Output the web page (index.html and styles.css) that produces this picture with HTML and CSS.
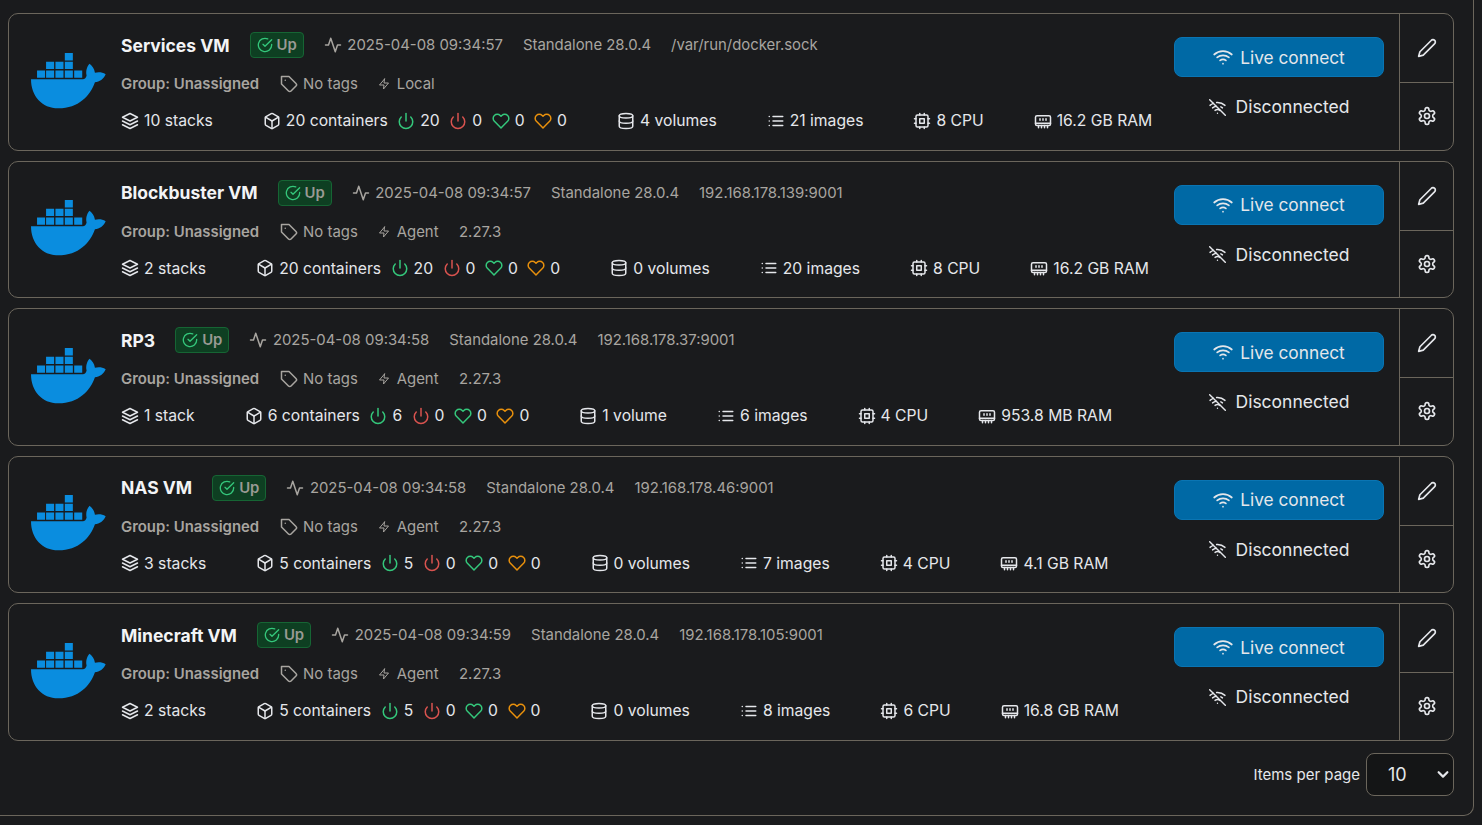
FILE: index.html
```html
<!DOCTYPE html>
<html lang="en">
<head>
  <meta charset="UTF-8" />
  <title>Environments</title>
  <link rel="stylesheet" href="styles.css">
</head>
<body>
  <svg class="icon-defs" aria-hidden="true">
    <symbol id="i-whale" viewBox="30 35 230 170">
      <path d="M134 38h24v22h-24zM78 64h24v22H78zM106 64h24v22h-24zM134 64h24v22h-24zM51 90h24v22H51zM78 90h24v22H78zM106 90h24v22h-24zM134 90h24v22h-24zM162 90h24v22h-24z"/>
      <path d="M33 116H188C193 116 198 112 199 105C196 92 200 78 208 70C216 76 222 84 224 97C234 94 246 95 256 101C250 115 238 124 224 125C210 165 175 203 115 203C65 203 33 165 33 116Z"/>
    </symbol>
    <symbol id="i-check" viewBox="0 0 24 24"><path d="M22 11.08V12a10 10 0 1 1-5.93-9.14"/><path d="M22 4 12 14.01l-3-3"/></symbol>
    <symbol id="i-activity" viewBox="0 0 24 24"><path d="M22 12h-4l-3 9L9 3l-3 9H2"/></symbol>
    <symbol id="i-tag" viewBox="0 0 24 24"><path d="M12 2H2v10l9.29 9.29c.94.94 2.48.94 3.42 0l6.58-6.58c.94-.94.94-2.48 0-3.42L12 2Z"/><path d="M7 7h.01"/></symbol>
    <symbol id="i-zap" viewBox="0 0 24 24"><path d="M13 2 3 14h9l-1 8 10-12h-9l1-8z"/></symbol>
    <symbol id="i-layers" viewBox="0 0 24 24"><path d="M12 2 2 7l10 5 10-5-10-5z"/><path d="m2 17 10 5 10-5"/><path d="m2 12 10 5 10-5"/></symbol>
    <symbol id="i-box" viewBox="0 0 24 24"><path d="M21 16V8a2 2 0 0 0-1-1.73l-7-4a2 2 0 0 0-2 0l-7 4A2 2 0 0 0 3 8v8a2 2 0 0 0 1 1.73l7 4a2 2 0 0 0 2 0l7-4A2 2 0 0 0 21 16z"/><path d="M3.27 6.96 12 12.01l8.73-5.05"/><path d="M12 22.08V12"/></symbol>
    <symbol id="i-power" viewBox="0 0 24 24"><path d="M18.36 6.64a9 9 0 1 1-12.73 0"/><path d="M12 2v10"/></symbol>
    <symbol id="i-heart" viewBox="0 0 24 24"><path d="M20.84 4.61a5.5 5.5 0 0 0-7.78 0L12 5.67l-1.06-1.06a5.5 5.5 0 0 0-7.78 7.78l1.06 1.06L12 21.23l7.78-7.78 1.06-1.06a5.5 5.5 0 0 0 0-7.78z"/></symbol>
    <symbol id="i-database" viewBox="0 0 24 24"><ellipse cx="12" cy="5" rx="9" ry="3"/><path d="M21 12c0 1.66-4 3-9 3s-9-1.34-9-3"/><path d="M3 5v14c0 1.66 4 3 9 3s9-1.34 9-3V5"/></symbol>
    <symbol id="i-list" viewBox="0 0 24 24"><path d="M8 6h13M8 12h13M8 18h13M3 6h.01M3 12h.01M3 18h.01"/></symbol>
    <symbol id="i-cpu" viewBox="0 0 24 24"><rect x="4" y="4" width="16" height="16" rx="2"/><rect x="9" y="9" width="6" height="6"/><path d="M15 2v2M15 20v2M2 15h2M2 9h2M20 15h2M20 9h2M9 2v2M9 20v2"/></symbol>
    <symbol id="i-ram" viewBox="0 0 24 24"><path d="M6 21v-3M10 21v-3M14 21v-3M18 21v-3M8 11V9M16 11V9M12 11V9M2 15h20"/><path d="M4 5h16a2 2 0 0 1 2 2v9a2 2 0 0 1-2 2H4a2 2 0 0 1-2-2V7a2 2 0 0 1 2-2z"/></symbol>
    <symbol id="i-wifi" viewBox="0 0 24 24"><path d="M5 12.55a11 11 0 0 1 14.08 0"/><path d="M1.42 9a16 16 0 0 1 21.16 0"/><path d="M8.53 16.11a6 6 0 0 1 6.95 0"/><path d="M12 20h.01"/></symbol>
    <symbol id="i-wifi-off" viewBox="0 0 24 24"><path d="m1 1 22 22"/><path d="M16.72 11.06A10.94 10.94 0 0 1 19 12.55"/><path d="M5 12.55a10.94 10.94 0 0 1 5.17-2.39"/><path d="M10.71 5.05A16 16 0 0 1 22.58 9"/><path d="M1.42 9a15.91 15.91 0 0 1 4.7-2.88"/><path d="M8.53 16.11a6 6 0 0 1 6.95 0"/><path d="M12 20h.01"/></symbol>
    <symbol id="i-pencil" viewBox="0 0 24 24"><path d="M17 3a2.85 2.83 0 1 1 4 4L7.5 20.5 2 22l1.5-5.5Z"/></symbol>
    <symbol id="i-settings" viewBox="0 0 24 24"><path d="M12.22 2h-.44a2 2 0 0 0-2 2v.18a2 2 0 0 1-1 1.73l-.43.25a2 2 0 0 1-2 0l-.15-.08a2 2 0 0 0-2.73.73l-.22.38a2 2 0 0 0 .73 2.73l.15.1a2 2 0 0 1 1 1.72v.51a2 2 0 0 1-1 1.74l-.15.09a2 2 0 0 0-.73 2.73l.22.38a2 2 0 0 0 2.73.73l.15-.08a2 2 0 0 1 2 0l.43.25a2 2 0 0 1 1 1.73V20a2 2 0 0 0 2 2h.44a2 2 0 0 0 2-2v-.18a2 2 0 0 1 1-1.73l.43-.25a2 2 0 0 1 2 0l.15.08a2 2 0 0 0 2.73-.73l.22-.39a2 2 0 0 0-.73-2.73l-.15-.08a2 2 0 0 1-1-1.74v-.5a2 2 0 0 1 1-1.74l.15-.09a2 2 0 0 0 .73-2.73l-.22-.38a2 2 0 0 0-2.73-.73l-.15.08a2 2 0 0 1-2 0l-.43-.25a2 2 0 0 1-1-1.73V4a2 2 0 0 0-2-2z"/><circle cx="12" cy="12" r="3"/></symbol>
  </svg>

  <main class="panel">
    <div class="env-list">

      <article class="env-card">
        <svg class="whale"><use href="#i-whale"/></svg>
        <div class="env-info">
          <div class="row row-top">
            <span class="env-name">Services VM</span>
            <span class="badge-up"><svg class="ico"><use href="#i-check"/></svg>Up</span>
            <span class="item"><svg class="ico"><use href="#i-activity"/></svg>2025-04-08 09:34:57</span>
            <span>Standalone 28.0.4</span>
            <span>/var/run/docker.sock</span>
          </div>
          <div class="row row-meta">
            <span class="group">Group: Unassigned</span>
            <span class="item"><svg class="ico"><use href="#i-tag"/></svg>No tags</span>
            <span class="item"><svg class="ico ico-sm"><use href="#i-zap"/></svg>Local</span>
          </div>
          <div class="row row-stats">
            <span class="item"><svg class="ico"><use href="#i-layers"/></svg>10 stacks</span>
            <span class="containers">
              <span class="item"><svg class="ico"><use href="#i-box"/></svg>20 containers</span>
              <span class="item"><svg class="ico green"><use href="#i-power"/></svg>20</span>
              <span class="item"><svg class="ico red"><use href="#i-power"/></svg>0</span>
              <span class="item"><svg class="ico green"><use href="#i-heart"/></svg>0</span>
              <span class="item"><svg class="ico orange"><use href="#i-heart"/></svg>0</span>
            </span>
            <span class="item"><svg class="ico"><use href="#i-database"/></svg>4 volumes</span>
            <span class="item"><svg class="ico"><use href="#i-list"/></svg>21 images</span>
            <span class="item"><svg class="ico"><use href="#i-cpu"/></svg>8 CPU</span>
            <span class="item"><svg class="ico"><use href="#i-ram"/></svg>16.2 GB RAM</span>
          </div>
        </div>
        <div class="env-connect">
          <button class="btn-live"><svg class="ico ico-lg"><use href="#i-wifi"/></svg>Live connect</button>
          <span class="disconnected"><svg class="ico"><use href="#i-wifi-off"/></svg>Disconnected</span>
        </div>
        <div class="env-actions">
          <a class="action"><svg class="ico ico-lg"><use href="#i-pencil"/></svg></a>
          <a class="action"><svg class="ico ico-lg"><use href="#i-settings"/></svg></a>
        </div>
      </article>

      <article class="env-card">
        <svg class="whale"><use href="#i-whale"/></svg>
        <div class="env-info">
          <div class="row row-top">
            <span class="env-name">Blockbuster VM</span>
            <span class="badge-up"><svg class="ico"><use href="#i-check"/></svg>Up</span>
            <span class="item"><svg class="ico"><use href="#i-activity"/></svg>2025-04-08 09:34:57</span>
            <span>Standalone 28.0.4</span>
            <span>192.168.178.139:9001</span>
          </div>
          <div class="row row-meta">
            <span class="group">Group: Unassigned</span>
            <span class="item"><svg class="ico"><use href="#i-tag"/></svg>No tags</span>
            <span class="item"><svg class="ico ico-sm"><use href="#i-zap"/></svg>Agent</span>
            <span>2.27.3</span>
          </div>
          <div class="row row-stats">
            <span class="item"><svg class="ico"><use href="#i-layers"/></svg>2 stacks</span>
            <span class="containers">
              <span class="item"><svg class="ico"><use href="#i-box"/></svg>20 containers</span>
              <span class="item"><svg class="ico green"><use href="#i-power"/></svg>20</span>
              <span class="item"><svg class="ico red"><use href="#i-power"/></svg>0</span>
              <span class="item"><svg class="ico green"><use href="#i-heart"/></svg>0</span>
              <span class="item"><svg class="ico orange"><use href="#i-heart"/></svg>0</span>
            </span>
            <span class="item"><svg class="ico"><use href="#i-database"/></svg>0 volumes</span>
            <span class="item"><svg class="ico"><use href="#i-list"/></svg>20 images</span>
            <span class="item"><svg class="ico"><use href="#i-cpu"/></svg>8 CPU</span>
            <span class="item"><svg class="ico"><use href="#i-ram"/></svg>16.2 GB RAM</span>
          </div>
        </div>
        <div class="env-connect">
          <button class="btn-live"><svg class="ico ico-lg"><use href="#i-wifi"/></svg>Live connect</button>
          <span class="disconnected"><svg class="ico"><use href="#i-wifi-off"/></svg>Disconnected</span>
        </div>
        <div class="env-actions">
          <a class="action"><svg class="ico ico-lg"><use href="#i-pencil"/></svg></a>
          <a class="action"><svg class="ico ico-lg"><use href="#i-settings"/></svg></a>
        </div>
      </article>

      <article class="env-card">
        <svg class="whale"><use href="#i-whale"/></svg>
        <div class="env-info">
          <div class="row row-top">
            <span class="env-name">RP3</span>
            <span class="badge-up"><svg class="ico"><use href="#i-check"/></svg>Up</span>
            <span class="item"><svg class="ico"><use href="#i-activity"/></svg>2025-04-08 09:34:58</span>
            <span>Standalone 28.0.4</span>
            <span>192.168.178.37:9001</span>
          </div>
          <div class="row row-meta">
            <span class="group">Group: Unassigned</span>
            <span class="item"><svg class="ico"><use href="#i-tag"/></svg>No tags</span>
            <span class="item"><svg class="ico ico-sm"><use href="#i-zap"/></svg>Agent</span>
            <span>2.27.3</span>
          </div>
          <div class="row row-stats">
            <span class="item"><svg class="ico"><use href="#i-layers"/></svg>1 stack</span>
            <span class="containers">
              <span class="item"><svg class="ico"><use href="#i-box"/></svg>6 containers</span>
              <span class="item"><svg class="ico green"><use href="#i-power"/></svg>6</span>
              <span class="item"><svg class="ico red"><use href="#i-power"/></svg>0</span>
              <span class="item"><svg class="ico green"><use href="#i-heart"/></svg>0</span>
              <span class="item"><svg class="ico orange"><use href="#i-heart"/></svg>0</span>
            </span>
            <span class="item"><svg class="ico"><use href="#i-database"/></svg>1 volume</span>
            <span class="item"><svg class="ico"><use href="#i-list"/></svg>6 images</span>
            <span class="item"><svg class="ico"><use href="#i-cpu"/></svg>4 CPU</span>
            <span class="item"><svg class="ico"><use href="#i-ram"/></svg>953.8 MB RAM</span>
          </div>
        </div>
        <div class="env-connect">
          <button class="btn-live"><svg class="ico ico-lg"><use href="#i-wifi"/></svg>Live connect</button>
          <span class="disconnected"><svg class="ico"><use href="#i-wifi-off"/></svg>Disconnected</span>
        </div>
        <div class="env-actions">
          <a class="action"><svg class="ico ico-lg"><use href="#i-pencil"/></svg></a>
          <a class="action"><svg class="ico ico-lg"><use href="#i-settings"/></svg></a>
        </div>
      </article>

      <article class="env-card">
        <svg class="whale"><use href="#i-whale"/></svg>
        <div class="env-info">
          <div class="row row-top">
            <span class="env-name">NAS VM</span>
            <span class="badge-up"><svg class="ico"><use href="#i-check"/></svg>Up</span>
            <span class="item"><svg class="ico"><use href="#i-activity"/></svg>2025-04-08 09:34:58</span>
            <span>Standalone 28.0.4</span>
            <span>192.168.178.46:9001</span>
          </div>
          <div class="row row-meta">
            <span class="group">Group: Unassigned</span>
            <span class="item"><svg class="ico"><use href="#i-tag"/></svg>No tags</span>
            <span class="item"><svg class="ico ico-sm"><use href="#i-zap"/></svg>Agent</span>
            <span>2.27.3</span>
          </div>
          <div class="row row-stats">
            <span class="item"><svg class="ico"><use href="#i-layers"/></svg>3 stacks</span>
            <span class="containers">
              <span class="item"><svg class="ico"><use href="#i-box"/></svg>5 containers</span>
              <span class="item"><svg class="ico green"><use href="#i-power"/></svg>5</span>
              <span class="item"><svg class="ico red"><use href="#i-power"/></svg>0</span>
              <span class="item"><svg class="ico green"><use href="#i-heart"/></svg>0</span>
              <span class="item"><svg class="ico orange"><use href="#i-heart"/></svg>0</span>
            </span>
            <span class="item"><svg class="ico"><use href="#i-database"/></svg>0 volumes</span>
            <span class="item"><svg class="ico"><use href="#i-list"/></svg>7 images</span>
            <span class="item"><svg class="ico"><use href="#i-cpu"/></svg>4 CPU</span>
            <span class="item"><svg class="ico"><use href="#i-ram"/></svg>4.1 GB RAM</span>
          </div>
        </div>
        <div class="env-connect">
          <button class="btn-live"><svg class="ico ico-lg"><use href="#i-wifi"/></svg>Live connect</button>
          <span class="disconnected"><svg class="ico"><use href="#i-wifi-off"/></svg>Disconnected</span>
        </div>
        <div class="env-actions">
          <a class="action"><svg class="ico ico-lg"><use href="#i-pencil"/></svg></a>
          <a class="action"><svg class="ico ico-lg"><use href="#i-settings"/></svg></a>
        </div>
      </article>

      <article class="env-card">
        <svg class="whale"><use href="#i-whale"/></svg>
        <div class="env-info">
          <div class="row row-top">
            <span class="env-name">Minecraft VM</span>
            <span class="badge-up"><svg class="ico"><use href="#i-check"/></svg>Up</span>
            <span class="item"><svg class="ico"><use href="#i-activity"/></svg>2025-04-08 09:34:59</span>
            <span>Standalone 28.0.4</span>
            <span>192.168.178.105:9001</span>
          </div>
          <div class="row row-meta">
            <span class="group">Group: Unassigned</span>
            <span class="item"><svg class="ico"><use href="#i-tag"/></svg>No tags</span>
            <span class="item"><svg class="ico ico-sm"><use href="#i-zap"/></svg>Agent</span>
            <span>2.27.3</span>
          </div>
          <div class="row row-stats">
            <span class="item"><svg class="ico"><use href="#i-layers"/></svg>2 stacks</span>
            <span class="containers">
              <span class="item"><svg class="ico"><use href="#i-box"/></svg>5 containers</span>
              <span class="item"><svg class="ico green"><use href="#i-power"/></svg>5</span>
              <span class="item"><svg class="ico red"><use href="#i-power"/></svg>0</span>
              <span class="item"><svg class="ico green"><use href="#i-heart"/></svg>0</span>
              <span class="item"><svg class="ico orange"><use href="#i-heart"/></svg>0</span>
            </span>
            <span class="item"><svg class="ico"><use href="#i-database"/></svg>0 volumes</span>
            <span class="item"><svg class="ico"><use href="#i-list"/></svg>8 images</span>
            <span class="item"><svg class="ico"><use href="#i-cpu"/></svg>6 CPU</span>
            <span class="item"><svg class="ico"><use href="#i-ram"/></svg>16.8 GB RAM</span>
          </div>
        </div>
        <div class="env-connect">
          <button class="btn-live"><svg class="ico ico-lg"><use href="#i-wifi"/></svg>Live connect</button>
          <span class="disconnected"><svg class="ico"><use href="#i-wifi-off"/></svg>Disconnected</span>
        </div>
        <div class="env-actions">
          <a class="action"><svg class="ico ico-lg"><use href="#i-pencil"/></svg></a>
          <a class="action"><svg class="ico ico-lg"><use href="#i-settings"/></svg></a>
        </div>
      </article>

    </div>

    <div class="pager">
      <span>Items per page</span>
      <div class="page-select">
        <span>10</span>
        <svg class="chevron" viewBox="0 0 16 16"><path d="m3 6 5 5 5-5"/></svg>
      </div>
    </div>
  </main>
</body>
</html>
```

FILE: styles.css
```css
* { box-sizing: border-box; margin: 0; padding: 0; }
html, body { height: 100%; }
body { font-family: Inter, 'Noto Sans', sans-serif; background-color: #1a1b1d; color: #e5e7eb; font-size: 16px; overflow: hidden; }

.icon-defs { display: none; }
.ico { width: 18px; height: 18px; flex: none; fill: none; stroke: currentColor; stroke-width: 2; stroke-linecap: round; stroke-linejoin: round; }
.ico-lg { width: 20px; height: 20px; }
.ico-sm { width: 12px; height: 12px; margin-right: 1px; }
.green { color: #34c77b; }
.red { color: #d9534f; }
.orange { color: #e8900c; }

.panel { width: 1474px; height: 816px; padding: 13px 19px 0 8px; border-right: 1px solid #6b665c; border-bottom: 1px solid #6b665c; border-bottom-right-radius: 10px; }
.env-list { display: flex; flex-direction: column; gap: 10px; }

.env-card { display: flex; align-items: stretch; height: 137.5px; border: 1px solid #6b665c; border-radius: 10px; }
.whale { width: 77px; height: 57px; flex: none; align-self: center; margin: 0 14px 3px 21px; }
#i-whale path { fill: #0a8ddf; stroke: none; }

.env-info { flex: 1; display: flex; flex-direction: column; padding-top: 19px; min-width: 0; }
.row { display: flex; align-items: center; gap: 20px; white-space: nowrap; }
.item { display: inline-flex; align-items: center; gap: 5.5px; }
.row-top { height: 24px; color: #a8a5a0; font-size: 14.9px; }
.env-name { font-size: 17.5px; font-weight: 700; color: #f3f4f6; }
.badge-up { display: inline-flex; align-items: center; gap: 4px; height: 26px; padding: 0 6px; background: #0e3f22; border: 1px solid #166534; border-radius: 4px; font-weight: 600; color: #9a9a94; }
.badge-up .ico { width: 16px; height: 16px; color: #34c77b; }
.row-meta { height: 24px; margin-top: 15px; gap: 20.5px; color: #a8a5a0; font-size: 14.9px; }
.group { font-weight: 600; }
.row-stats { height: 24px; margin-top: 12.5px; gap: 50px; color: #e5e7eb; font-size: 15.7px; }
.row-stats .item { gap: 5px; }
.containers { display: inline-flex; align-items: center; gap: 9.5px; }

.env-connect { width: 210px; flex: none; display: flex; flex-direction: column; align-items: center; padding-top: 23px; margin-right: 15px; }
.btn-live { width: 100%; height: 40px; display: flex; align-items: center; justify-content: center; gap: 7px; background: #0069a5; color: #e5e7eb; border: 1px solid #0a75b3; border-radius: 8px; font: inherit; font-size: 17.3px; cursor: pointer; }
.disconnected { display: flex; align-items: center; gap: 10px; margin-top: 18px; font-size: 17.5px; line-height: 24px; }
.disconnected .ico { width: 17px; height: 17px; }

.env-actions { width: 54px; flex: none; display: flex; flex-direction: column; border-left: 1px solid #6b665c; }
.action { flex: 1; display: flex; align-items: center; justify-content: center; color: #e5e7eb; }
.action:first-child { flex: 0 0 68px; }
.action + .action { border-top: 1px solid #6b665c; }

.pager { display: flex; align-items: center; justify-content: flex-end; gap: 6px; margin-top: 12px; font-size: 15px; }
.page-select { width: 88px; height: 43px; display: flex; align-items: center; justify-content: space-between; padding: 0 3px 0 21px; background: #141516; border: 1px solid #6b665c; border-radius: 8px; font-size: 18px; }
.chevron { width: 14px; height: 14px; fill: none; stroke: #e5e7eb; stroke-width: 2.5; stroke-linecap: round; stroke-linejoin: round; }
```
